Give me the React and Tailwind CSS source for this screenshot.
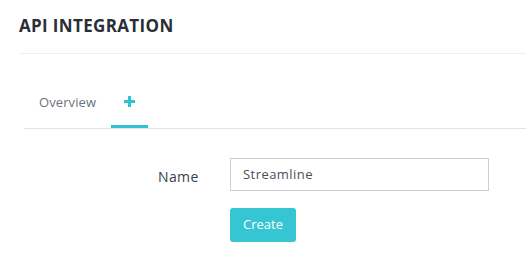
export default function App() {
  const font = { fontFamily: '"Open Sans", "Noto Sans", Arial, sans-serif' };
  return (
    <div className="w-[526px] h-[276px] bg-white overflow-hidden" style={font}>
      <div className="ml-[19px] h-[54px] border-b border-[#eceef2] flex items-center">
        <h1 className="text-[17px] font-bold text-[#2a2e36] tracking-[0.35px] leading-none mt-[-2px]">
          API INTEGRATION
        </h1>
      </div>
      <div className="ml-[24px] mt-[26px] flex border-b border-[#dde3ea]">
        <div className="h-[48px] w-[87px] pl-[15px] flex items-center border-b-[3px] border-transparent">
          <span className="text-[13px] text-[#6d7179] tracking-[0.1px]">Overview</span>
        </div>
        <div className="h-[48px] w-[37px] flex items-center justify-center border-b-[3px] border-[#30c3cf]">
          <svg width="11" height="11" viewBox="0 0 11 11" className="mb-[2px]">
            <rect x="4" y="0" width="3" height="11" fill="#2ec4d0" />
            <rect x="0" y="4" width="11" height="3" fill="#2ec4d0" />
          </svg>
        </div>
      </div>
      <div className="mt-[29px] flex">
        <div className="w-[230px] flex flex-col">
          <div className="h-[33px] flex items-center">
            <span className="ml-[158px] text-[14px] text-[#3c4049] tracking-[0.4px] mt-[4px]">Name</span>
          </div>
        </div>
        <div className="flex flex-col gap-[17px]">
          <div className="w-[259px] h-[33px] border border-[#c6cfdc] flex items-center pl-[12px]">
            <span className="text-[13px] text-[#4a4f57] tracking-[0.45px]">Streamline</span>
          </div>
          <button className="w-[66px] h-[34px] rounded-[3px] bg-[#36c5d2] text-white text-[13px] flex items-center justify-center">
            Create
          </button>
        </div>
      </div>
    </div>
  );
}
